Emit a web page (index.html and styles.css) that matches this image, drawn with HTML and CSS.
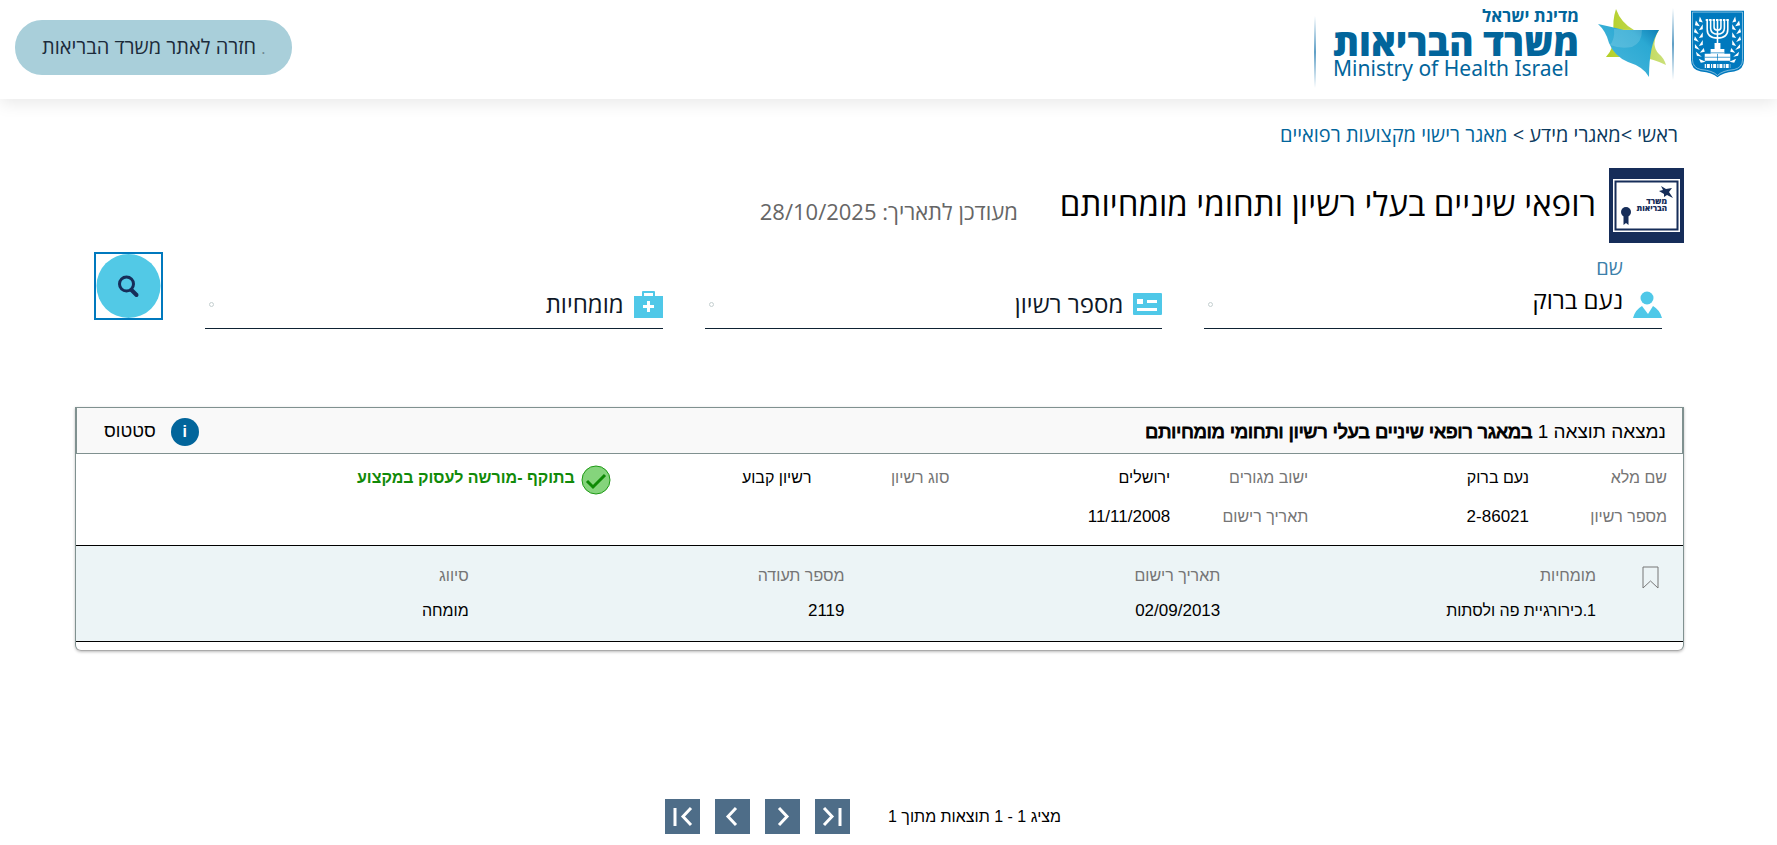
FILE: index.html
```html
<!DOCTYPE html>
<html lang="he" dir="rtl">
<head>
  <meta charset="UTF-8">
  <meta name="viewport" content="width=device-width, initial-scale=1.0">
  <title>רופאי שיניים בעלי רשיון ותחומי מומחיותם</title>
  <link rel="stylesheet" href="styles.css">
</head>
<body>
  <header class="header">
    <div class="brand">
      <svg class="emblem" viewBox="0 0 54 68">
        <path d="M0 0H54V50Q54 60 44 62Q32 63 27 68Q22 63 10 62Q0 60 0 50Z" fill="#0079be"/>
        <path d="M1.500 1.500H52.500V50Q52.500 58 44 60Q32 61 27 66Q22 61 10 60Q1.500 58 1.500 50Z" fill="none" stroke="#fff" stroke-width=".5"/>
        <g fill="none" stroke="#fff" stroke-width="1.600">
          <path d="M27 10V42M23.500 10V17Q23.500 20 27 20Q30.500 20 30.500 17V10M20 10V18Q20 24 27 24Q34 24 34 18V10M16.500 10V19Q16.500 28 27 28Q37.500 28 37.500 19V10"/>
          <path d="M15 9.500H39" stroke-width="2" stroke-dasharray="2.500 1"/>
        </g>
        <path d="M24 33H30V39H34V44H40V51H14V44H20V39H24Z" fill="#fff"/>
        <path d="M14 47.500H40M20 43H34M27 44V51" stroke="#0079be" stroke-width=".7"/>
        <g fill="#fff">
          <path d="M9 6L12 12L8 11ZM5 10L9 16L4 15ZM12 14L8 20L12 19ZM4 18L8 24L3 22ZM12 22L8 28L12 27ZM4 26L8 32L3 30ZM12 30L8 36L12 35ZM4 34L9 40L4 38ZM13 38L9 43L14 42ZM5 42L11 47L6 46ZM8 49L15 52L10 53Z"/>
          <path d="M45 6L42 12L46 11ZM49 10L45 16L50 15ZM42 14L46 20L42 19ZM50 18L46 24L51 22ZM42 22L46 28L42 27ZM50 26L46 32L51 30ZM42 30L46 36L42 35ZM50 34L45 40L50 38ZM41 38L45 43L40 42ZM49 42L43 47L48 46ZM46 49L39 52L44 53Z"/>
        </g>
        <path d="M14 56.500H40" stroke="#fff" stroke-width="4" stroke-dasharray="1.200 1 3 1.200"/>
      </svg>
      <span class="brand-line"></span>
      <svg class="star" viewBox="0 0 68 68">
        <defs>
          <linearGradient id="blue" x1="0" y1="1" x2="1" y2="0">
            <stop offset="0" stop-color="#4fb9dd"/>
            <stop offset=".7" stop-color="#2ba9d3"/>
            <stop offset="1" stop-color="#0a76b0"/>
          </linearGradient>
          <linearGradient id="green" x1="0" y1="0" x2="1" y2="0">
            <stop offset="0" stop-color="#b4cf25"/>
            <stop offset="1" stop-color="#cbe07a"/>
          </linearGradient>
        </defs>
        <path d="M18 0Q23 14 36 21L61 21Q52 36 61 45Q66 49 68 56Q56 50 42 48L8 48Q17 38 16 24Q14 12 18 0Z" fill="url(#green)"/>
        <path d="M0 15Q14 18 26 21L61 21Q51 36 51 68Q46 58 30 53Q16 47 11 34Q8 22 0 15Z" fill="url(#blue)"/>
        <path d="M16 20L44 21Q44 34 34 38Q22 40 12 36Q17 30 16 20Z" fill="#fff" opacity=".15"/>
      </svg>
      <div class="brand-text">
        <span class="brand-state">מדינת ישראל</span>
        <span class="brand-name">משרד הבריאות</span>
        <span class="brand-en" dir="ltr">Ministry of Health Israel</span>
      </div>
      <span class="brand-line brand-line-end"></span>
    </div>
    <a class="back-link" href="#"><small>.</small> חזרה לאתר משרד הבריאות</a>
  </header>

  <main class="page">
    <nav class="breadcrumb">
      <a class="dark" href="#">ראשי</a> &gt;<a class="dark" href="#">מאגרי מידע</a> &gt; <a href="#">מאגר רישוי מקצועות רפואיים</a>
    </nav>

    <div class="title-row">
      <svg class="title-icon" viewBox="0 0 75 75">
        <path d="M0 0H75V75H0Z" fill="#162d59"/>
        <path d="M4 11H71V64H4Z" fill="#fff"/>
        <path d="M6.500 13.500H68.500V61.500H6.500Z" fill="none" stroke="#162d59" stroke-width="2"/>
        <path d="M52 18L57 21L63 20L60 24L64 30L58 27L55 29L55 26L50 23L54 22Z" fill="#162d59"/>
        <circle cx="17" cy="44" r="5" fill="#162d59"/>
        <path d="M14.500 46H19.500V57L17 55L14.500 57Z" fill="#162d59"/>
        <text class="icon-text" x="58" y="36">משרד</text>
        <text class="icon-text" x="58" y="43">הבריאות</text>
      </svg>
      <h1>רופאי שיניים בעלי רשיון ותחומי מומחיותם</h1>
      <span class="updated">מעודכן לתאריך: 28/10/2025</span>
    </div>

    <form class="search">
      <div class="field">
        <svg class="field-icon" viewBox="0 0 29 27">
          <circle cx="14" cy="7" r="6.500"/>
          <path d="M0 27Q2 19 9 15L15 23L20 15Q27 19 29 27Z"/>
        </svg>
        <div class="field-box filled">
          <label for="name">שם</label>
          <input id="name" type="text" value="נעם ברוק">
        </div>
        <button class="clear" type="button" aria-label="ניקוי"></button>
      </div>
      <div class="field">
        <svg class="field-icon" viewBox="0 0 29 27">
          <path fill-rule="evenodd" d="M1 2H28Q29 2 29 3V23Q29 24 28 24H1Q0 24 0 23V3Q0 2 1 2ZM4 8V13H10V8ZM14 9V12H24V9ZM4 17V20H24V17Z"/>
        </svg>
        <div class="field-box">
          <input type="text" placeholder="מספר רשיון" aria-label="מספר רשיון">
        </div>
        <button class="clear" type="button" aria-label="ניקוי"></button>
      </div>
      <div class="field">
        <svg class="field-icon" viewBox="0 0 29 27">
          <path fill-rule="evenodd" d="M0 5H8V1Q8 0 9 0H20Q21 0 21 1V5H29V27H0ZM10 5H19V2H10ZM13 10V14H9V17H13V21H16V17H20V14H16V10Z"/>
        </svg>
        <div class="field-box">
          <input type="text" placeholder="מומחיות" aria-label="מומחיות">
        </div>
        <button class="clear" type="button" aria-label="ניקוי"></button>
      </div>
      <button class="search-btn" type="submit" aria-label="חיפוש">
        <svg viewBox="0 0 64 64">
          <circle cx="32" cy="32" r="32" fill="#52c9e6"/>
          <circle cx="30" cy="30" r="7" fill="none" stroke="#162d59" stroke-width="3"/>
          <path d="M35 36L40 41" stroke="#162d59" stroke-width="4" stroke-linecap="round"/>
        </svg>
      </button>
    </form>

    <section class="results">
      <div class="results-head">
        <h2>נמצאה תוצאה 1 <b>במאגר רופאי שיניים בעלי רשיון ותחומי מומחיותם</b></h2>
        <div class="status-head">
          <span class="info">i</span>
          <span>סטטוס</span>
        </div>
      </div>

      <div class="person">
        <dl>
          <dt>שם מלא</dt><dd>נעם ברוק</dd>
          <dt>מספר רשיון</dt><dd class="num">2-86021</dd>
        </dl>
        <dl>
          <dt>ישוב מגורים</dt><dd>ירושלים</dd>
          <dt>תאריך רישום</dt><dd class="num">11/11/2008</dd>
        </dl>
        <dl>
          <dt>סוג רשיון</dt><dd>רשיון קבוע</dd>
        </dl>
        <div class="status">
          <svg viewBox="0 0 30 30">
            <circle cx="15" cy="15" r="14" fill="#85d47c" stroke="#1f9a16"/>
            <path d="M6 16L12 22L24 10" fill="none" stroke="#0f8a06" stroke-width="3"/>
          </svg>
          <span>בתוקף -מורשה לעסוק במקצוע</span>
        </div>
      </div>

      <div class="specialty">
        <svg class="bookmark" viewBox="0 0 17 23">
          <path d="M1 1H16V22L8.500 15L1 22Z" fill="none" stroke="#777"/>
        </svg>
        <table>
          <thead>
            <tr><th>מומחיות</th><th>תאריך רישום</th><th>מספר תעודה</th><th>סיווג</th></tr>
          </thead>
          <tbody>
            <tr><td>1.כירורגיית פה ולסתות</td><td class="num">02/09/2013</td><td class="num">2119</td><td>מומחה</td></tr>
          </tbody>
        </table>
      </div>
    </section>

    <div class="pager">
      <span class="pager-text">מציג 1 - 1 תוצאות מתוך 1</span>
      <button type="button" aria-label="ראשון"><svg viewBox="0 0 35 35"><path d="M9 9L17 17.500L9 26M25 9V27"/></svg></button>
      <button type="button" aria-label="הקודם"><svg viewBox="0 0 35 35"><path d="M14 9L22 17.500L14 26"/></svg></button>
      <button type="button" aria-label="הבא"><svg viewBox="0 0 35 35"><path d="M21 9L13 17.500L21 26"/></svg></button>
      <button type="button" aria-label="אחרון"><svg viewBox="0 0 35 35"><path d="M26 9L18 17.500L26 26M10 9V27"/></svg></button>
    </div>
  </main>
</body>
</html>
```

FILE: styles.css
```css
:root {
  --navy: #162d59;
  --link: #02659b;
  --sky: #4fc8e8;
  --line: #809190;
  --grey: #757575;
}

* {
  box-sizing: border-box;
}

body {
  margin: 0;
  font-family: "Open Sans", "Liberation Sans", sans-serif;
  font-size: 20px;
  color: #000;
  background: #fff;
}

a {
  text-decoration: none;
}

button {
  padding: 0;
  border: 0;
}

/* header */
.header {
  display: flex;
  justify-content: space-between;
  align-items: flex-start;
  height: 99px;
  padding: 8px 33px 0 15px;
  box-shadow: 0 4px 16px #e8e8e8;
}

.brand {
  display: flex;
  align-items: flex-start;
  color: var(--link);
}

.emblem {
  width: 53px;
  height: 68px;
  margin-top: 2px;
}

.brand-line {
  width: 2px;
  height: 72px;
  margin: 0 17px 0 6px;
  background: linear-gradient(#fff, #5f9fc6, #fff);
}

.brand-line-end {
  margin-top: 8px;
}

.star {
  width: 68px;
  height: 68px;
  margin-top: 1px;
}

.brand-text {
  display: flex;
  flex-direction: column;
  margin-right: 19px;
}

.brand-state {
  font-size: 17px;
  font-weight: 700;
  line-height: 16px;
}

.brand-name {
  font-size: 37px;
  font-weight: 800;
  line-height: 36px;
}

.brand-en {
  font-family: "Noto Sans", sans-serif;
  font-size: 21px;
  line-height: 16px;
}

.back-link {
  margin-top: 12px;
  padding: 0 26px 0 27px;
  border-radius: 27px;
  background: #a9cfda;
  color: #1c2b3a;
  line-height: 54px;
}

.back-link small {
  font-size: 16px;
  color: #6f8790;
}

.page {
  padding: 20px 93px 11px 75px;
}

.breadcrumb {
  padding-right: 6px;
  line-height: 32px;
  color: #0b3a5e;
}

.breadcrumb a {
  color: var(--link);
}

.breadcrumb .dark {
  color: #0b3a5e;
}

.title-row {
  display: flex;
  align-items: center;
  height: 76px;
  margin-top: 16px;
}

.title-icon {
  width: 75px;
  height: 75px;
}

.icon-text {
  font-size: 8px;
  font-weight: 800;
  fill: var(--navy);
}

h1 {
  margin: 0 13px 0 42px;
  padding-bottom: 4px;
  font-size: 33px;
  font-weight: 400;
}

.updated {
  font-size: 22px;
  color: #666;
  padding-top: 12px;
}

/* search form */
.search {
  display: flex;
  align-items: flex-end;
  gap: 42px;
  padding: 8px 22px 0 19px;
}

.field {
  display: flex;
  flex: 1;
  align-items: flex-end;
  height: 78px;
  padding-bottom: 10px;
  border-bottom: 1px solid #0e2233;
}

.field-icon {
  width: 29px;
  height: 27px;
  fill: var(--sky);
}

.field-box {
  display: flex;
  flex: 1;
  flex-direction: column;
  padding: 0 10px;
}

.field-box label {
  font-size: 20px;
  line-height: 24px;
  color: #3c80aa;
}

.field-box input {
  width: 100%;
  height: 30px;
  padding: 0;
  border: 0;
  outline: 0;
  background: none;
  font: inherit;
  font-size: 24px;
}

.field-box.filled input {
  height: 38px;
}

.field-box input::placeholder {
  color: #0e1726;
  opacity: 1;
}

.clear {
  width: 5px;
  height: 5px;
  margin: 0 0 11px 4px;
  border: 1px solid #c4cfd0;
  border-radius: 50%;
  background: none;
}

.search-btn {
  width: 69px;
  height: 68px;
  margin-bottom: 9px;
  border: 2px solid #0079be;
  background: #fff;
}

.search-btn svg {
  display: block;
  width: 100%;
  height: 64px;
}

/* results */
.results {
  margin-top: 78px;
  padding-bottom: 8px;
  border: 1px solid var(--line);
  border-bottom-color: #aaa;
  border-radius: 0 0 6px 6px;
  box-shadow: 0 1px 3px #bbb;
  font-family: "Liberation Sans", sans-serif;
  font-size: 16px;
}

.num {
  font-size: 17px;
}

.results-head {
  display: flex;
  justify-content: space-between;
  align-items: center;
  height: 46px;
  padding: 2px 16px 0 27px;
  border: 1px solid var(--line);
  border-top: 0;
  background: #f9f9f9;
  font-size: 18px;
}

h2 {
  margin: 0;
  font-size: 19px;
  font-weight: 400;
}

/* keeps the regular letter widths */
h2 b {
  font-weight: 400;
  -webkit-text-stroke: 1px #000;
}

.status-head {
  display: flex;
  align-items: center;
  gap: 15px;
}

.info {
  width: 28px;
  border-radius: 50%;
  background: #02659b;
  color: #fff;
  font-size: 16px;
  font-weight: 700;
  line-height: 28px;
  text-align: center;
}

.person {
  display: grid;
  grid-template-columns: repeat(4, 1fr);
  height: 92px;
  padding: 4px 16px 0 156px;
  border-bottom: 1px solid #000;
}

.person dl {
  display: grid;
  grid-template-columns: 138px 1fr;
  grid-auto-rows: 39px;
  margin: 0;
  line-height: 39px;
}

.person dt {
  color: var(--grey);
}

.person dd {
  margin: 0;
}

.status {
  display: flex;
  gap: 6px;
  margin-right: -20px;
  color: #118a08;
  font-weight: 700;
  line-height: 39px;
  white-space: nowrap;
}

.status svg {
  width: 30px;
  height: 30px;
  margin-top: 7px;
}

.specialty {
  display: flex;
  align-items: flex-start;
  padding: 12px 24px 0 17px;
  height: 96px;
  border-bottom: 1px solid #000;
  background: #ecf4f6;
}

.bookmark {
  flex: none;
  width: 17px;
  height: 23px;
  margin: 8px 0 0 46px;
}

.specialty table {
  width: 100%;
  table-layout: fixed;
  border-collapse: collapse;
}

.specialty th,
.specialty td {
  height: 35px;
  padding: 0;
  font-weight: 400;
  text-align: right;
}

.specialty th {
  color: var(--grey);
}

.pager {
  display: flex;
  align-items: center;
  justify-content: center;
  gap: 15px;
  margin-top: 148px;
  padding-right: 33px;
  font-family: "Liberation Sans", sans-serif;
  font-size: 16px;
}

.pager-text {
  margin-left: 23px;
}

.pager button {
  width: 35px;
  height: 35px;
  background: #4e6d88;
}

.pager svg {
  display: block;
  fill: none;
  stroke: #fff;
  stroke-width: 3;
}
```
